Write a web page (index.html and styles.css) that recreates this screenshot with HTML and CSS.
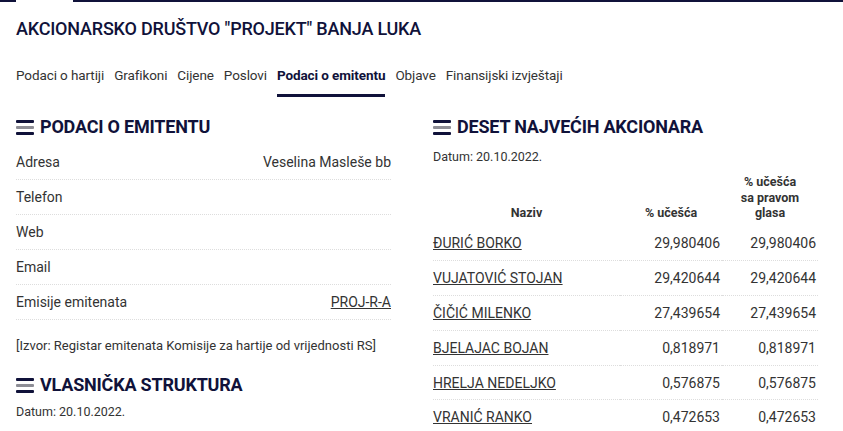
FILE: index.html
```html
<!DOCTYPE html>
<html lang="bs">
<head>
    <meta charset="UTF-8">
    <meta name="viewport" content="width=device-width, initial-scale=1.0">
    <title>Podaci o emitentu</title>
    <link rel="stylesheet" href="styles.css">
</head>
<body>
    <div class="topline">
        <div class="tl1"></div>
        <div class="tlgap"></div>
        <div class="tl2"></div>
    </div>

    <div class="page">
        <h1 class="title">AKCIONARSKO DRUŠTVO "PROJEKT" BANJA LUKA</h1>

        <div class="tabs">
            <div class="tab">Podaci o hartiji</div>
            <div class="tab">Grafikoni</div>
            <div class="tab">Cijene</div>
            <div class="tab">Poslovi</div>
            <div class="tab active">Podaci o emitentu</div>
            <div class="tab">Objave</div>
            <div class="tab">Finansijski izvještaji</div>
        </div>

        <div class="cols">
            <div class="left">
                <h2 class="head"><span class="bars"><i></i><i class="mid"></i><i></i></span>PODACI O EMITENTU</h2>
                <div class="rows">
                    <div class="row"><span>Adresa</span><span>Veselina Masleše bb</span></div>
                    <div class="row"><span>Telefon</span><span></span></div>
                    <div class="row"><span>Web</span><span></span></div>
                    <div class="row"><span>Email</span><span></span></div>
                    <div class="row"><span>Emisije emitenata</span><a href="#">PROJ-R-A</a></div>
                </div>
                <p class="src">[Izvor: Registar emitenata Komisije za hartije od vrijednosti RS]</p>

                <h2 class="head head2"><span class="bars"><i></i><i class="mid"></i><i></i></span>VLASNIČKA STRUKTURA</h2>
                <div class="datum">Datum: 20.10.2022.</div>
            </div>

            <div class="right">
                <h2 class="head"><span class="bars"><i></i><i class="mid"></i><i></i></span>DESET NAJVEĆIH AKCIONARA</h2>
                <div class="datum datum-r">Datum: 20.10.2022.</div>
                <table class="tbl">
                    <thead>
                        <tr>
                            <th class="c1">Naziv</th>
                            <th class="c2">% učešća</th>
                            <th class="c3">% učešća sa pravom glasa</th>
                        </tr>
                    </thead>
                    <tbody>
                        <tr><td><a href="#">ĐURIĆ BORKO</a></td><td class="num">29,980406</td><td class="num">29,980406</td></tr>
                        <tr><td><a href="#">VUJATOVIĆ STOJAN</a></td><td class="num">29,420644</td><td class="num">29,420644</td></tr>
                        <tr><td><a href="#">ČIČIĆ MILENKO</a></td><td class="num">27,439654</td><td class="num">27,439654</td></tr>
                        <tr><td><a href="#">BJELAJAC BOJAN</a></td><td class="num">0,818971</td><td class="num">0,818971</td></tr>
                        <tr><td><a href="#">HRELJA NEDELJKO</a></td><td class="num">0,576875</td><td class="num">0,576875</td></tr>
                        <tr><td><a href="#">VRANIĆ RANKO</a></td><td class="num">0,472653</td><td class="num">0,472653</td></tr>
                    </tbody>
                </table>
            </div>
        </div>
    </div>
</body>
</html>
```

FILE: styles.css
```css
html{
  font-family: Roboto, "Noto Sans", sans-serif;
  color: #333;
}

body{
  margin: 0;
  overflow: hidden;
}

.topline{
  display: flex;
  height: 2px;
}
.tl1{
  width: 16px;
  background-color: #10123a;
}
.tlgap{
  width: 57px;
}
.tl2{
  flex: 1;
  background-color: #10123a;
}

.page{
  padding: 0 16px;
}

.title{
  margin: 16px 0 0 0;
  font-size: 18px;
  font-weight: 500;
  color: #10123a;
  letter-spacing: -0.2px;
  line-height: 22px;
}

.tabs{
  display: flex;
  gap: 10px;
  margin-top: 27px;
  font-size: 13.5px;
  letter-spacing: -0.1px;
}
.tab{
  padding-bottom: 11px;
  border-bottom: 3px solid transparent;
  line-height: 16px;
}
.tab.active{
  font-weight: 700;
  color: #10123a;
  border-bottom-color: #10123a;
}

.cols{
  display: flex;
  gap: 42px;
  margin-top: 17px;
}
.left{
  width: 375px;
}
.right{
  width: 385px;
}

.head{
  display: flex;
  align-items: center;
  margin: 0;
  font-size: 18px;
  font-weight: 700;
  color: #10123a;
  line-height: 26px;
  letter-spacing: -0.2px;
}
.head2{
  margin-top: 19px;
}
.bars{
  display: flex;
  flex-direction: column;
  gap: 3px;
  width: 18px;
  margin-right: 6px;
}
.bars i{
  display: block;
  height: 3px;
  background-color: #10123a;
  border-radius: 1px;
}
.bars i.mid{
  background-color: #8e8e96;
}

.rows{
  margin-top: 5px;
}
.row{
  display: flex;
  justify-content: space-between;
  font-size: 14px;
  line-height: 34px;
  border-bottom: 1px dotted #ddd;
}
.row a, .tbl a{
  color: #333;
}

.src{
  margin: 18px 0 0 0;
  font-size: 13px;
}

.datum{
  font-size: 12.5px;
  margin-top: 6px;
}
.datum-r{
  margin-top: 9px;
}

.tbl{
  width: 100%;
  border-collapse: collapse;
  margin-top: 6px;
  font-size: 14px;
}
.tbl th{
  font-size: 12.5px;
  font-weight: 700;
  line-height: 15.5px;
  vertical-align: bottom;
  text-align: center;
  padding: 4px 0 6px 0;
}
.c1{
  width: 187px;
}
.c2{
  width: 102px;
}
.tbl th.c3{
  padding-left: 14px;
  padding-right: 14px;
}
.tbl td{
  height: 33.8px;
  padding: 0;
  border-bottom: 1px dotted #ddd;
}
.tbl tr:last-child td{
  border-bottom: none;
}
.tbl .num{
  text-align: right;
  padding-right: 2px;
}
```
